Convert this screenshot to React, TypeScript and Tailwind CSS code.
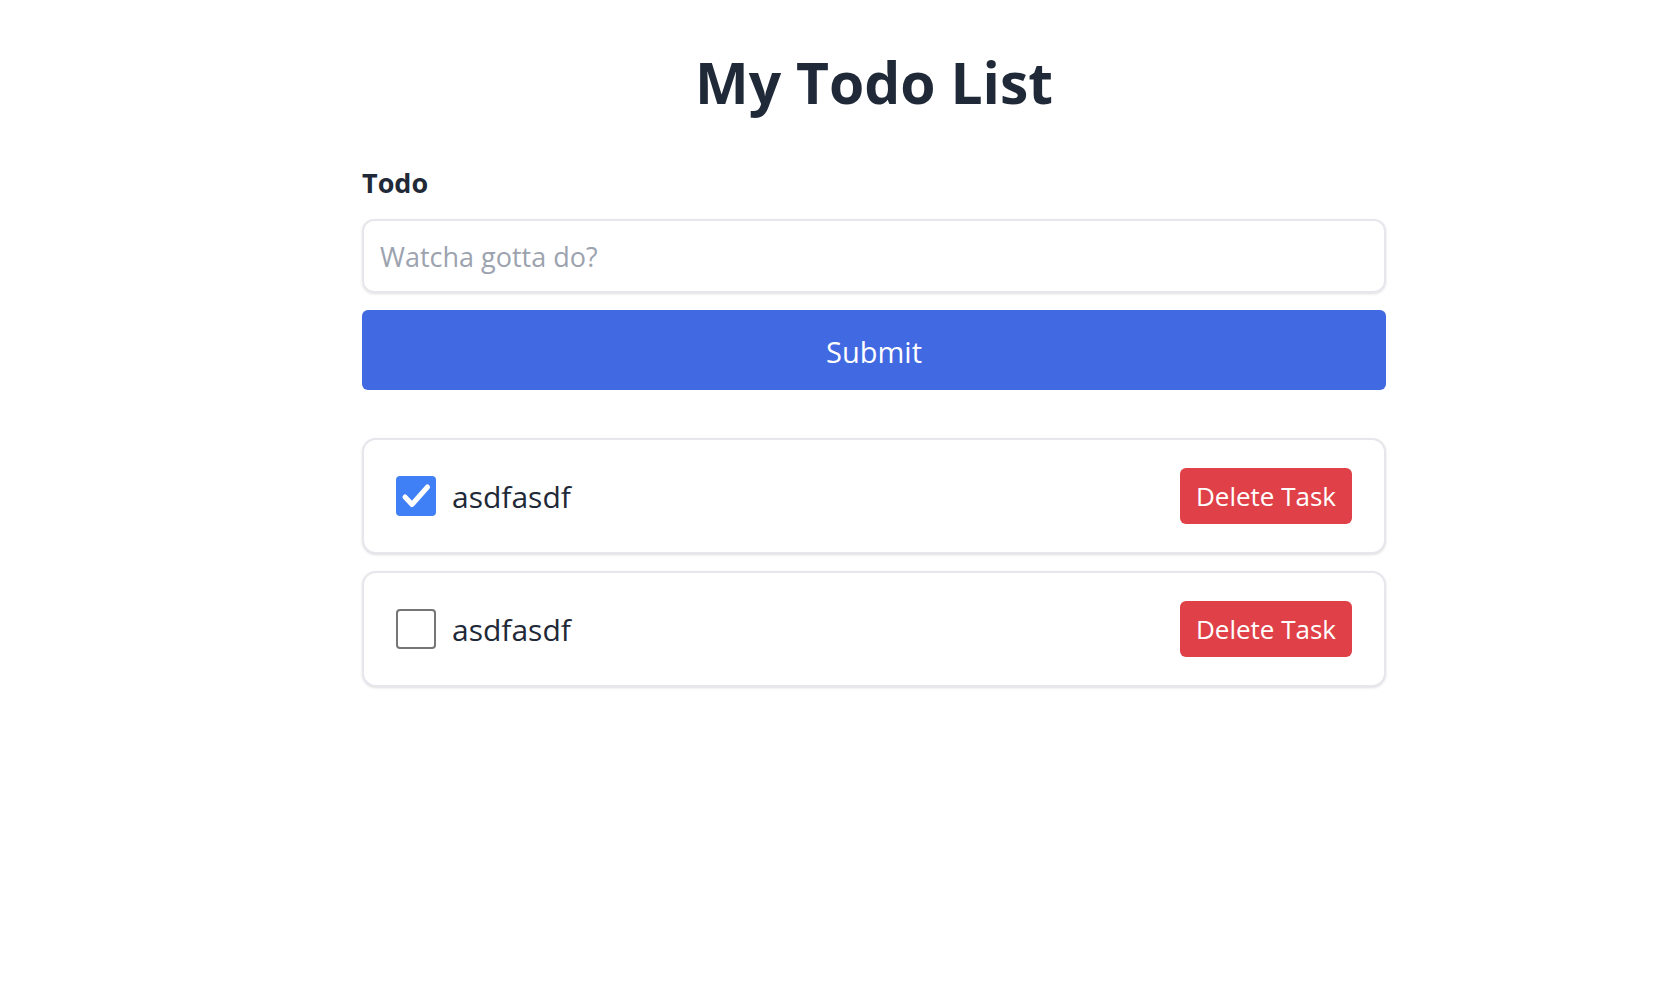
import React, { useState } from 'react';

type Todo = { id: number; text: string; done: boolean };

function CheckBox({ checked, onChange }: { checked: boolean; onChange: () => void }) {
  return (
    <button
      type="button"
      onClick={onChange}
      className={`w-10 h-10 rounded-[4px] flex items-center justify-center shrink-0 ${
        checked ? 'bg-[#4080f6]' : 'bg-white border-2 border-[#767676]'
      }`}
    >
      {checked && (
        <svg viewBox="0 0 40 40" className="w-10 h-10">
          <path d="M9 21 L16 28.5 L31.5 11" fill="none" stroke="white" strokeWidth="5" strokeLinecap="round" strokeLinejoin="round" />
        </svg>
      )}
    </button>
  );
}

export default function App() {
  const [todos, setTodos] = useState<Todo[]>([
    { id: 1, text: 'asdfasdf', done: true },
    { id: 2, text: 'asdfasdf', done: false },
  ]);
  const [value, setValue] = useState('');

  const submit = (e: React.FormEvent) => {
    e.preventDefault();
    if (!value.trim()) return;
    setTodos([...todos, { id: Date.now(), text: value, done: false }]);
    setValue('');
  };

  return (
    <div className="min-h-screen bg-white pl-[71px] font-['Open_Sans',sans-serif]">
      <div className="mx-auto max-w-5xl pt-[54px]">
        <h1 className="text-center text-[57px] leading-none font-bold text-[#1f2937]">My Todo List</h1>

        <form onSubmit={submit} className="mt-[58px]">
          <label className="block text-[27px] leading-none font-bold text-[#1f2937]">Todo</label>
          <input
            value={value}
            onChange={(e) => setValue(e.target.value)}
            placeholder="Watcha gotta do?"
            className="mt-[23px] block w-full h-[74px] px-4 rounded-[12px] border-2 border-[#e6e6ec] shadow-sm text-[27px] text-[#1f2937] placeholder:text-[#9ca3af] outline-none"
          />
          <button
            type="submit"
            className="mt-[17px] w-full h-[80px] pt-[3px] rounded-md bg-[#4169e1] text-white text-[29px]"
          >
            Submit
          </button>
        </form>

        <div className="mt-[48px] flex flex-col gap-[17px]">
          {todos.map((t) => (
            <div
              key={t.id}
              className="flex items-center justify-between h-[116px] px-8 rounded-[14px] border-2 border-[#e6e6ec] shadow-sm bg-white"
            >
              <div className="flex items-center gap-4">
                <CheckBox
                  checked={t.done}
                  onChange={() => setTodos(todos.map((x) => (x.id === t.id ? { ...x, done: !x.done } : x)))}
                />
                <span className="text-[30px] text-[#1f2937]">{t.text}</span>
              </div>
              <button
                onClick={() => setTodos(todos.filter((x) => x.id !== t.id))}
                className="h-14 px-4 rounded-md bg-[#e04148] text-white text-[26px]"
              >
                Delete Task
              </button>
            </div>
          ))}
        </div>
      </div>
    </div>
  );
}
